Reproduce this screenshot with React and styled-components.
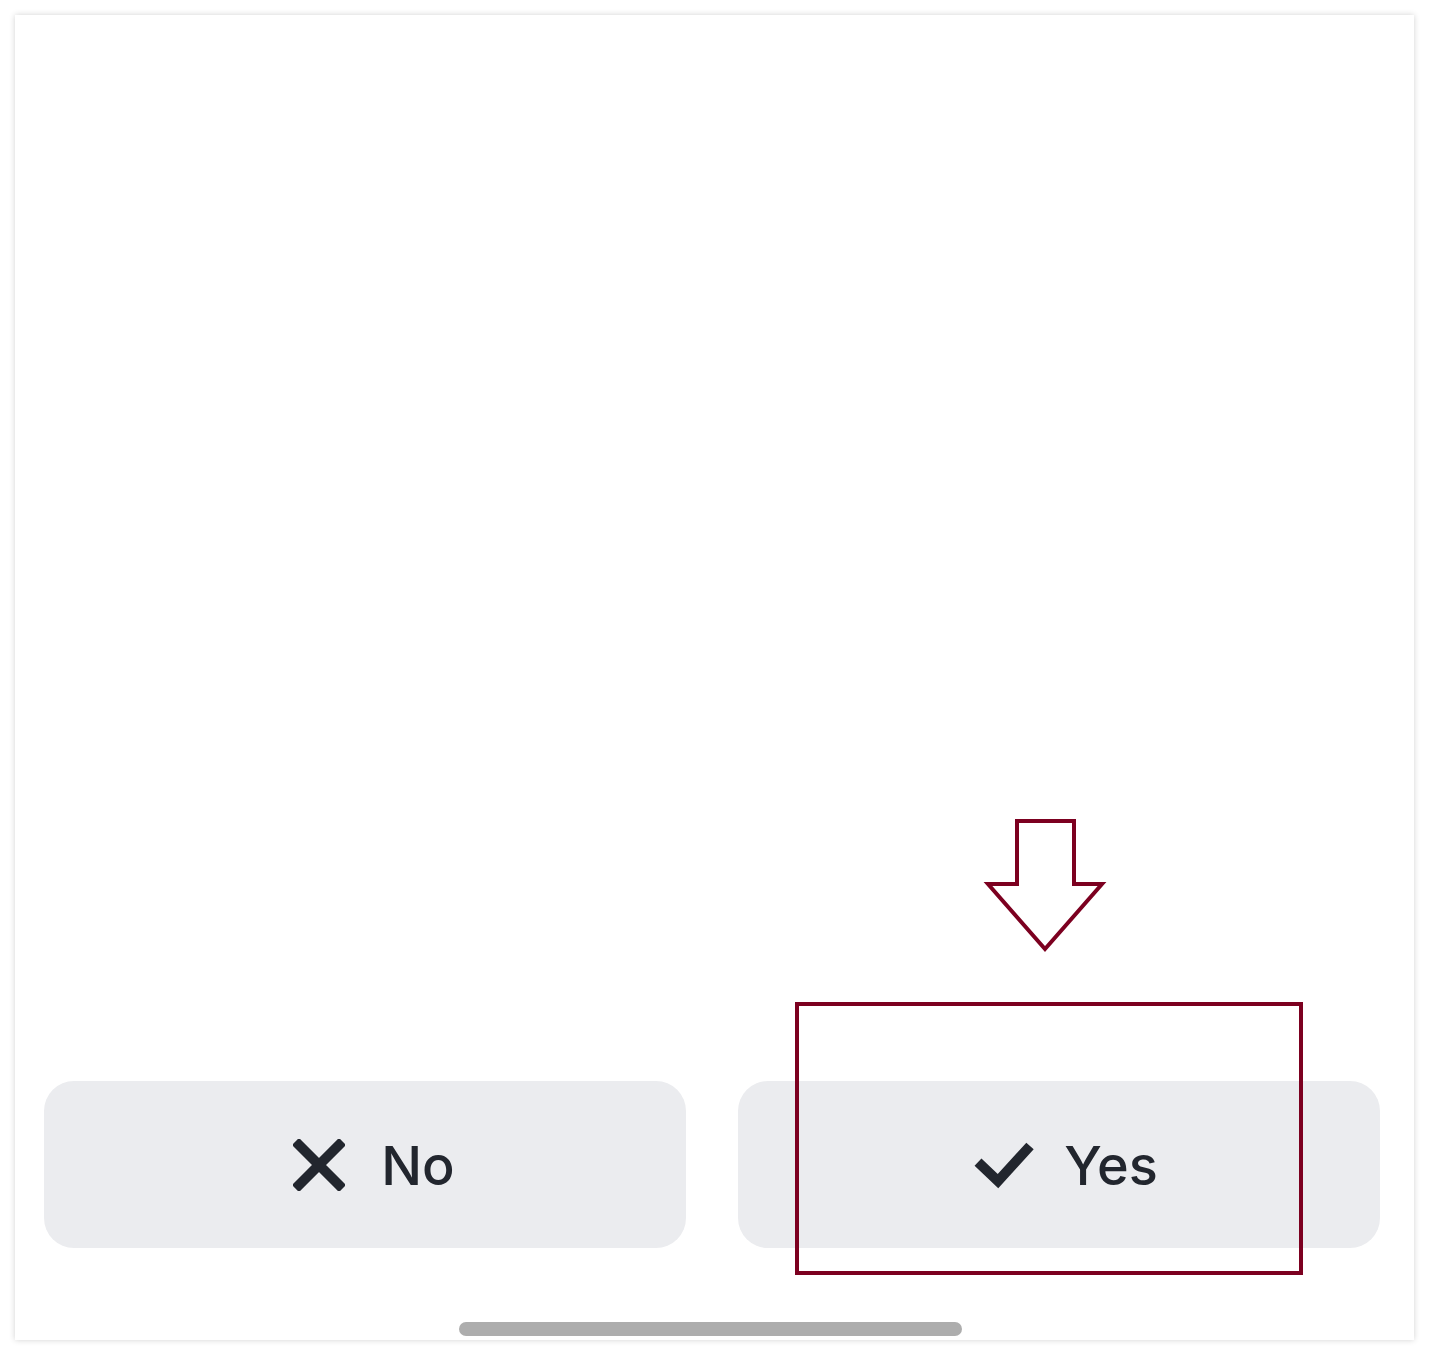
import React from "react";
import styled, { createGlobalStyle } from "styled-components";

const Global = createGlobalStyle`
  html, body { margin: 0; padding: 0; background: #ffffff; }
  body { font-family: Inter, "Noto Sans", sans-serif; }
`;

const Page = styled.div`
  padding: 15px;
  box-sizing: border-box;
  width: 1429px;
  height: 1355px;
`;

const Card = styled.div`
  position: relative;
  width: 1399px;
  height: 1325px;
  background: #ffffff;
  box-shadow: 0 0 6px rgba(0, 0, 0, 0.18);
  display: flex;
  flex-direction: column;
  justify-content: flex-end;
  box-sizing: border-box;
`;

const ButtonRow = styled.div`
  display: flex;
  gap: 52px;
  padding: 0 0 0 29px;
`;

const ChoiceButton = styled.button`
  flex: 0 0 642px;
  width: 642px;
  height: 167px;
  border: none;
  border-radius: 30px;
  background: #ebecef;
  color: #22262e;
  display: flex;
  align-items: center;
  justify-content: center;
  gap: ${(p) => p.$gap}px;
  padding: 0 0 0 ${(p) => p.$shift}px;
  font-family: Inter, "Noto Sans", sans-serif;
  font-size: 54px;
  font-weight: 500;
  cursor: pointer;
`;

const Label = styled.span`
  line-height: 1;
  transform: translateY(1px);
`;

const HomeIndicator = styled.div`
  align-self: center;
  width: 503px;
  height: 14px;
  border-radius: 7px;
  background: #adadad;
  margin: 74px 0 4px 0;
  transform: translateX(-4px);
`;

const Highlight = styled.div`
  position: absolute;
  left: 780px;
  top: 987px;
  width: 508px;
  height: 273px;
  border: 4px solid #7c0020;
  box-sizing: border-box;
  pointer-events: none;
`;

const ArrowSvg = styled.svg`
  position: absolute;
  left: 955px;
  top: 803px;
  pointer-events: none;
`;

const CrossIcon = () => (
  <svg width="52" height="52" viewBox="0 0 52 52">
    <path d="M6 6 L46 46 M46 6 L6 46" stroke="#22262e" strokeWidth="10" strokeLinecap="square" fill="none" />
  </svg>
);

const CheckIcon = () => (
  <svg width="60" height="48" viewBox="0 0 60 48">
    <path d="M4 21 L24 40 L56 5" stroke="#22262e" strokeWidth="10" strokeLinecap="butt" strokeLinejoin="miter" fill="none" />
  </svg>
);

export default function App() {
  return (
    <>
      <Global />
      <Page>
        <Card>
          <ButtonRow>
            <ChoiceButton $gap={36} $shift={18}>
              <CrossIcon />
              <Label>No</Label>
            </ChoiceButton>
            <ChoiceButton $gap={30} $shift={14}>
              <CheckIcon />
              <Label>Yes</Label>
            </ChoiceButton>
          </ButtonRow>
          <HomeIndicator />
          <Highlight />
          <ArrowSvg width="150" height="160" viewBox="0 0 150 160">
            <path
              d="M47 3 L104 3 L104 66 L132 66 L75 131 L18 66 L47 66 Z"
              stroke="#7c0020"
              strokeWidth="4"
              fill="none"
              strokeLinejoin="miter"
            />
          </ArrowSvg>
        </Card>
      </Page>
    </>
  );
}
